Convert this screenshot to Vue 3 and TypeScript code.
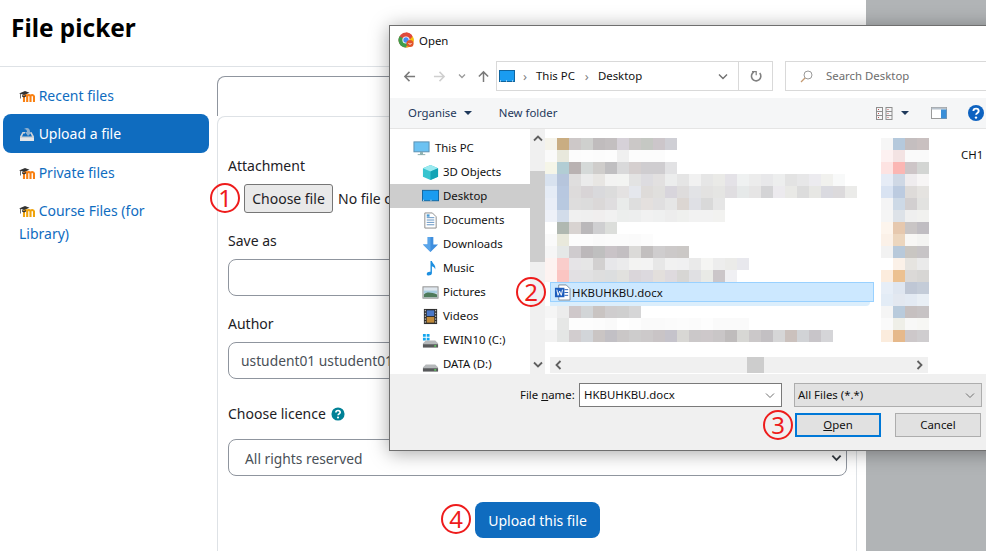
<script setup lang="ts">
const navItems = [
  { label: 'Recent files', icon: 'moodle', active: false },
  { label: 'Upload a file', icon: 'upload', active: true },
  { label: 'Private files', icon: 'moodle', active: false },
  { label: 'Course Files (for Library)', icon: 'course', active: false },
]
const tree = [
  { label: 'This PC', icon: 'pc', root: true, selected: false },
  { label: '3D Objects', icon: 'cube', root: false, selected: false },
  { label: 'Desktop', icon: 'desktop', root: false, selected: true },
  { label: 'Documents', icon: 'docs', root: false, selected: false },
  { label: 'Downloads', icon: 'down', root: false, selected: false },
  { label: 'Music', icon: 'music', root: false, selected: false },
  { label: 'Pictures', icon: 'pics', root: false, selected: false },
  { label: 'Videos', icon: 'video', root: false, selected: false },
  { label: 'EWIN10 (C:)', icon: 'win', root: false, selected: false },
  { label: 'DATA (D:)', icon: 'drive', root: false, selected: false },
]
const marks = [
  { n: '1', x: 210, y: 183 },
  { n: '2', x: 516, y: 277 },
  { n: '3', x: 763, y: 410 },
  { n: '4', x: 441, y: 504 },
]
const parse = (rows: string[]) => rows.map((r) => r.split(' ').map((c) => '#' + c))
const blurLeft = parse([
  'f5f3ea c9ad82 cdc8c8 cfd0ce c0bcbd c3bfc0 d6d1d8 cbc8c7 c5c8c3 ccc6ca cfcfd5',
  'fafafa e8e8dc fcfcfc fdfdfd fcfcfc fdfdfd f0f0f0 fcfcfc fcfcfc fcfcfc',
  'f5f5e8 b2cdd4 b9b2b2 d5d9d8 cfcdcb c0bfc1 d9d9da d5cfcf cfcdd0 cfcdd0 e2e2e4',
  'd8e2ef b6c5dc dfdede ebebeb e8e6e3 f3f3f2 f3f4f2 e3e3e3 dddce0 e2e0e0 eceded e5e5e5 f1f1f1 e6e6e6 eaeae7 e4e2e7 eff1f1 ececec e8e8ea edeeee e3e3e3 e7e7e8 ecebef f1f1ee f8f9f9',
  'e5ecf6 b8c8e0 dddbdb d8d4d6 d9d9dc dcdcdc e4e2e2 e5e7ed dedbd9 e0dfdd d8d5dc dedcdc e2e3e6 e3e2e1 e5e5e3 e0dee1 e6e9e9 e6e5e5 d4d4d6 eceaee e9e9e6 dcdcdc e7e7e4 dadae0 dcdadc ebebe9',
  'e9eef7 b8c9e0 dedddd dcdcdc dbd8d8 dfdddf e9ebea dedede e4e0de e0dfe0 e6e6e6 dcd6d2 dfe0e5 d9d9d9 e6e6e6',
  'eef1f8 d2dcea f0f0f0 efefef f0eeee f1f1f1 eceeed edeeee f1f1f1 eff0f0 ededed eff0ee f2f2f2 f2f2f2 f2f2f0',
  'ffffff b0b8b1 d8d3d1 bab8ba cfcfd1 dcdedb',
  'fafafa e9e9dc fcfcfc fcfcfc fafafa fbfbfb fbfbfb fafafa fcfcfc',
  'f6f6f6 e5e8e7 cfcbce bcb8ba bfbfbf c9c3c7 c3bfc2 dbdad8 c2bfbf cfcdce ccc9c9 cbc8c6',
  'fdf3f1 f9cdcb e6e4e7 e6e6e6 d2d0d0 e7e7ea ebebec f3f3f2 f3f3f3 e7e7e7 f1f1f1 f0f0f1 eaeaea f5f5f3 ededed ebebe9 e8e8ed',
  'fdf3f1 fbc5c2 e2e0e3 e1e1e2 dedede dcdedf e1e1de dad6da dcd9de e3dfdc dedade d7d6d4 e0e0e3 e9eae6 cbc6c9 f0f0f3',
  'ffffff',
  'ffffff',
  'f5f5f5 ececec cfc8ca d2d5d7 c9c4c2 cfcdce cfcfcf d6d6d7',
  'fafafa e6e7e6 fdfdfd fdfdfd fcfcfc fafafa ffffff fdfdfd fafafa fafafa fbfbfb fcfcfc fbfbfb fdfdfd fafafa fafafa fafafa',
  'f2f2f2 e4e6e5 d2cdcf d2d5d9 cac5c4 c2c0c5 cac7c7 cdcccc ccc9ca c9c4c6 c5c3cb d8d7d4 cbc8c9 cdc8ca c9c6c7 bfbcbc d7d7d4 cbc8c9 c3c0c3 d6d6d7 cbc1bd d1d3d6 c8c5c9 d5d5d8',
])
const blurRight = parse([
  'f6f6f6 b5c9dc c4bebf c9c0c0',
  'fdf1f1 f3e3e3 fafafa fafafa',
  'fde3e2 fbb6b3 cdc5c7 d3d5d3',
  'e6ecf6 cfd8e5 efecee f7f5f5',
  'd9e3f2 bccbe0 dedbd9 e5e3e0',
  'f4f4f5 cdd9e6 d2cfd0 e2e2e0',
  'f5f5f5 dde2e8 efefef f1f1ef',
  'fdf5ed e6c8ae c9c5c5 c0bdc2',
  'fbf1e8 ecd6be f8f7f5 f4f4f2',
  'f2f2f2 b8c9da c9c6c2 c7c4c6',
  'ffffff fbf1e8 e6e4e0 eaeaea',
  'fcecdd ecc191 dbd9d7 d7d6d4',
  'e7eef7 dfe6f0 bfc7d5 c4ccd8',
  'e3ecf6 e3e8f0 e3eaf3 e9eff5',
  'f5f5f5 b9cbdc c6c0c0 c7c3c4',
  'fafafa efefe8 f8f8f7 f7f7f4',
  'fbecdd e6b98b cdc8ca cfcdcf',
])
</script>

<template>
  <div class="screen">
    <div class="page">
      <header class="head"><h1>File picker</h1></header>
      <div class="body">
        <nav class="side">
          <a v-for="it in navItems" :key="it.label" class="side-item" :class="{ active: it.active }">
            <svg v-if="it.icon === 'upload'" class="nav-ico" viewBox="0 0 16 16">
              <path d="M1 10.500 3.500 6H6v1.500H4.400L3 10.500h10l-1.400-3H10V6h2.500L15 10.500V15H1z" fill="#cfd3d8" />
              <path d="M1 12h14v3H1z" fill="#e4e6e8" />
              <path d="M5 3c3-2 6-1 6 3h2l-4 4-3-4h2c0-2-1-3-3-3z" fill="#8eb0cf" />
            </svg>
            <svg v-else class="nav-ico" viewBox="0 0 16 16">
              <path d="M5 14V8.500c0-2 3.200-2 3.200 0V14M8.200 8.500c0-2 3.300-2 3.300 0V14M11.500 8.500c0-2 3.500-2 3.500 .5V14" fill="none" :stroke="it.icon === 'course' ? '#f0a30a' : '#f98012'" stroke-width="2.100" />
              <path d="M0 5.500 6 3l4.500 1.700L5 7 2 5.900V10.500H1.300V5.700z" fill="#333" />
              <path d="M3 7 5 7.900 7 7V8.500L5 9.500 3 8.500z" fill="#333" />
            </svg>
            {{ it.label }}
          </a>
        </nav>
        <main class="content">
          <div class="tabs"></div>
          <form class="panel">
            <label class="lbl first">Attachment</label>
            <div class="file-row">
              <button type="button" class="choose">Choose file</button>
              <span class="nofile">No file chosen</span>
            </div>
            <label class="lbl gap">Save as</label>
            <div class="field"></div>
            <label class="lbl gap">Author</label>
            <div class="field">ustudent01 ustudent01</div>
            <label class="lbl licence">
              Choose licence
              <svg class="help" viewBox="0 0 16 16">
                <circle cx="8" cy="8" r="7.500" fill="#008196" />
                <path d="M5.600 6.300c0-3 4.900-3 4.900-.2 0 1.800-2.400 1.800-2.400 3.400" fill="none" stroke="#fff" stroke-width="1.900" />
                <circle cx="8" cy="12" r="1.200" fill="#fff" />
              </svg>
            </label>
            <div class="field select">
              <span>All rights reserved</span>
              <svg class="sel-chev" viewBox="0 0 12 8"><path d="M1.500 1.500 6 6l4.500-4.500" fill="none" stroke="#343a40" stroke-width="2" /></svg>
            </div>
            <div class="submit"><button type="button" class="upload">Upload this file</button></div>
          </form>
        </main>
      </div>
    </div>
    <div class="backdrop"></div>

    <section class="dialog">
      <div class="titlebar">
        <svg class="chrome" viewBox="0 0 16 16">
          <circle cx="8" cy="8" r="7.500" fill="#dd4b3e" />
          <path d="M8 8 1.500 4.200A7.500 7.500 0 0 0 8 15.500l3.400-6z" fill="#3f9d4b" />
          <path d="M8 .5a7.500 7.500 0 0 1 6.500 3.700H8z" fill="#e24a3b" />
          <path d="M14.700 4.200A7.500 7.500 0 0 1 8 15.500L11.500 8z" fill="#f4c20d" />
          <circle cx="8" cy="8" r="3.600" fill="#fff" />
          <circle cx="8" cy="8" r="2.700" fill="#4a8af4" />
          <circle cx="12" cy="11.500" r="3.600" fill="#e2542b" />
          <path d="m10.500 11 1.500 1.500 1.500-1.500" fill="none" stroke="#fff" stroke-width="1" />
        </svg>
        <span class="title">Open</span>
        <svg class="close" viewBox="0 0 12 12"><path d="M1 1l10 10M11 1 1 11" stroke="#111" stroke-width="1.100" /></svg>
      </div>
      <div class="navbar">
        <svg class="nb" viewBox="0 0 14 14"><path d="M13 7H2M7 2 2 7l5 5" fill="none" stroke="#7a7a7a" stroke-width="1.600" /></svg>
        <svg class="nb forward" viewBox="0 0 14 14"><path d="M1 7h11M7 2l5 5-5 5" fill="none" stroke="#cfcfcf" stroke-width="1.600" /></svg>
        <svg class="nb small" viewBox="0 0 8 6"><path d="M1 1.500 4 4.500l3-3" fill="none" stroke="#9a9a9a" stroke-width="1.300" /></svg>
        <svg class="nb up" viewBox="0 0 14 14"><path d="M7 13V2M2 7l5-5 5 5" fill="none" stroke="#7a7a7a" stroke-width="1.600" /></svg>
        <div class="address">
          <svg class="crumb-ico" viewBox="0 0 16 13"><rect x=".5" y=".5" width="15" height="11" fill="#1a9cf0" stroke="#10659f" /><path d="M1 11h14" stroke="#fff" stroke-dasharray="1 5" /></svg>
          <span class="sep">›</span><span class="crumb">This PC</span><span class="sep">›</span><span class="lift">Desktop</span>
          <svg class="addr-chev" viewBox="0 0 10 7"><path d="M1 1.500 5 5.500l4-4" fill="none" stroke="#707070" stroke-width="1.400" /></svg>
          <div class="refresh">
            <svg viewBox="0 0 12 13" width="12" height="13"><path d="M3 2.500a4.700 4.700 0 1 0 6 0" transform="rotate(10 6 7)" fill="none" stroke="#808080" stroke-width="1.600" /><path d="M2 1.600h4.200v3.600" fill="none" stroke="#808080" stroke-width="1.200" /></svg>
          </div>
        </div>
        <div class="search">
          <svg viewBox="0 0 13 13" width="13" height="13"><circle cx="8" cy="5" r="4" fill="none" stroke="#9a9a9a" /><path d="M5 8 1 12" stroke="#c59a70" stroke-width="1.200" /></svg>
          <span class="lift">Search Desktop</span>
        </div>
      </div>
      <div class="toolbar">
        <span class="tool lift">Organise</span>
        <i class="caret"></i>
        <span class="tool newf lift">New folder</span>
        <svg class="views" viewBox="0 0 17 13"><g fill="none" stroke="#8e8e8e"><rect x=".5" y=".5" width="6" height="12" /><rect x="10" y=".5" width="6" height="12" /><path d="M.5 4.500h6M.5 8.500h6M10 4.500h6M10 8.500h6" /></g><path d="M2 2.500h1M2 6.500h1M2 10.500h1M11.500 2.500h1M11.500 6.500h1M11.500 10.500h1" stroke="#c05050" /></svg>
        <i class="caret dark"></i>
        <svg class="pane" viewBox="0 0 16 12"><rect x=".5" y=".5" width="15" height="11" fill="#fff" stroke="#9a9a9a" /><rect x=".5" y=".5" width="15" height="2" fill="#b8c2cc" /><rect x="10" y="2.500" width="5.500" height="9" fill="#3a8fd8" /></svg>
        <svg class="q" viewBox="0 0 16 16"><circle cx="8" cy="8" r="8" fill="#0d62c0" /><path d="M5.400 6c0-3.200 5.300-3.200 5.300 0 0 1.900-2.600 1.900-2.600 3.800" fill="none" stroke="#fff" stroke-width="1.900" /><circle cx="8" cy="12.600" r="1.200" fill="#fff" /></svg>
      </div>
      <div class="main">
        <div class="tree">
          <div v-for="n in tree" :key="n.label" class="tree-row" :class="{ root: n.root, sel: n.selected }">
            <svg class="tree-ico" viewBox="0 0 18 18">
              <template v-if="n.icon === 'pc'"><rect x="1" y="2" width="16" height="10.500" fill="#6cc2f2" stroke="#5a8fb0" /><path d="M8 13h2v2H8zM5 15.500h8" stroke="#8aa" fill="#9bb" /></template>
              <template v-else-if="n.icon === 'cube'"><path d="M9 1 17 4.500v9L9 17l-8-3.500v-9z" fill="#37c4cf" /><path d="M9 1 17 4.500 9 8 1 4.500z" fill="#9beaf0" /><path d="M9 8v9l8-3.500v-9z" fill="#12a3b5" /></template>
              <template v-else-if="n.icon === 'desktop'"><rect x=".5" y="2.500" width="17" height="11" fill="#1a9cf0" stroke="#10659f" /><path d="M1 13h16" stroke="#fff" stroke-dasharray="1 7" /></template>
              <template v-else-if="n.icon === 'docs'"><path d="M3 1h8l4 4v12H3z" fill="#fff" stroke="#8a8a8a" /><path d="M5 6h8M5 8.500h8M5 11h8M5 13.500h8" stroke="#5e8fc0" /><path d="M5 2.500h3V5H5z" fill="#4a9ad4" /></template>
              <template v-else-if="n.icon === 'down'"><path d="M6 1h6v8h5l-8 8-8-8h5z" fill="#3e8ede" /><path d="M6 1h3v16l-8-8h5z" fill="#5aa5ea" /></template>
              <template v-else-if="n.icon === 'music'"><path d="M9 1h1.500c.5 3 4.500 4 3.500 9-.5-2-2-3-3.500-3.500V14c0 2.500-5.500 3.500-5.500.8C5 12.500 8 12 9 12.500z" fill="#1d8fe0" /></template>
              <template v-else-if="n.icon === 'pics'"><rect x="1" y="3" width="16" height="12" fill="#dfe7ee" stroke="#8d8d8d" /><path d="M2 7h14v3H2z" fill="#a7cde0" /><path d="M2 11c3-3 8-2 14 0v3H2z" fill="#4e7a5a" /></template>
              <template v-else-if="n.icon === 'video'"><rect x="2" y="1" width="14" height="16" fill="#2f2f2f" /><rect x="5" y="2.500" width="8" height="6" fill="#4a78c8" /><rect x="5" y="9.500" width="8" height="6" fill="#c08a3a" /><path d="M3.500 2v14M14.500 2v14" stroke="#ddd" stroke-dasharray="1.500 1.500" /></template>
              <template v-else-if="n.icon === 'win'"><path d="M1 2h3v3H1zM5 2h3v3H5zM1 6h3v3H1zM5 6h3v3H5z" fill="#14a6ee" /><path d="M2 11 4 9h10l3 3v4H1v-4z" fill="#b5b8ba" /><rect x="1" y="13" width="16" height="3.500" fill="#58595b" /><rect x="13" y="14" width="2" height="1.500" fill="#5fdc5f" /></template>
              <template v-else><path d="M2 11 4 9h10l3 3v4H1v-4z" fill="#b5b8ba" /><rect x="1" y="13" width="16" height="3.500" fill="#58595b" /><rect x="13" y="14" width="2" height="1.500" fill="#5fdc5f" /></template>
            </svg>
            <span class="lift">{{ n.label }}</span>
          </div>
        </div>
        <div class="vscroll">
          <svg class="sc-arrow" viewBox="0 0 10 7"><path d="M1 5.500 5 1.500l4 4" fill="none" stroke="#606060" stroke-width="1.800" /></svg>
          <div class="vtrack"><div class="vthumb"></div></div>
          <svg class="sc-arrow" viewBox="0 0 10 7"><path d="M1 1.500 5 5.500l4-4" fill="none" stroke="#606060" stroke-width="1.800" /></svg>
        </div>
        <div class="files">
          <div class="blur-wrap">
            <div class="blur left">
              <div v-for="(r, i) in blurLeft" :key="i" class="blur-row">
                <i v-for="(c, j) in r" :key="j" :style="{ background: c }"></i>
              </div>
            </div>
            <div class="blur right">
              <div v-for="(r, i) in blurRight" :key="i" class="blur-row">
                <i v-for="(c, j) in r" :key="j" :style="{ background: c }"></i>
              </div>
            </div>
            <span class="ch">CH1</span>
          </div>
          <div class="smear"></div>
          <div class="file-sel">
            <svg class="word" viewBox="0 0 18 18">
              <path d="M5 1h8l4 4v12H5z" fill="#fff" stroke="#7d8a99" />
              <path d="M11 6h4M11 9h4M11 12h4" stroke="#2b5fb0" />
              <rect x="1" y="4" width="10" height="10" fill="#1d5cbc" />
              <path d="m3 6 1.300 6L6 7.500 7.700 12 9 6" fill="none" stroke="#fff" stroke-width="1" />
            </svg>
            <span>HKBUHKBU.docx</span>
          </div>
          <div class="hscroll">
            <svg class="sc-arrow-h" viewBox="0 0 7 10"><path d="M5.500 1 1.500 5l4 4" fill="none" stroke="#606060" stroke-width="1.800" /></svg>
            <div class="htrack"><div class="hthumb"></div></div>
            <svg class="sc-arrow-h" viewBox="0 0 7 10"><path d="M1.500 1l4 4-4 4" fill="none" stroke="#606060" stroke-width="1.800" /></svg>
          </div>
        </div>
      </div>
      <div class="footer">
        <div class="foot-line">
          <span class="fname lift">File <u>n</u>ame:</span>
          <div class="name-box"><span class="lift">HKBUHKBU.docx</span><svg viewBox="0 0 10 7" width="10" height="7"><path d="M1 1.500 5 5.500l4-4" fill="none" stroke="#707070" /></svg></div>
          <div class="type-box"><span class="lift">All Files (*.*)</span><svg viewBox="0 0 10 7" width="10" height="7"><path d="M1 1.500 5 5.500l4-4" fill="none" stroke="#707070" /></svg></div>
        </div>
        <div class="foot-btns">
          <button type="button" class="win-btn primary"><u>O</u>pen</button>
          <button type="button" class="win-btn">Cancel</button>
        </div>
      </div>
    </section>

    <span v-for="m in marks" :key="m.n" class="mark" :style="{ left: m.x + 'px', top: m.y + 'px' }">{{ m.n }}</span>
  </div>
</template>

<style>
html, body { margin: 0; overflow: hidden; background: #fff; }
</style>

<style scoped>
.screen { position: relative; display: flex; width: 986px; height: 551px; overflow: hidden; font-family: "Noto Sans", "Open Sans", sans-serif; color: #1d2125; }
.page { width: 866px; flex: none; background: #fff; }
.backdrop { flex: 1; background: #b1b4b6; }
.head { height: 67px; box-sizing: border-box; border-bottom: 1px solid #dee2e6; padding: 12px 11px 0; }
h1 { margin: 0; font-size: 24.4px; line-height: 32px; font-weight: 700; color: #000; }
.body { display: flex; }
.side { width: 217px; flex: none; box-sizing: border-box; padding: 8px 8px 0 3px; }
.side-item { display: block; padding: 8px 16px; font-size: 14px; line-height: 23px; color: #0f6cbf; border-radius: 8px; }
.side-item:first-child { padding: 9px 16px 7px; }
.side-item:last-child { padding-top: 7px; }
.side-item.active { background: #0f6cbf; color: #fff; }
.nav-ico { width: 16px; height: 16px; vertical-align: -3px; }
.content { width: 640px; flex: none; margin-top: 9px; }
.tabs { height: 39px; border: 1px solid #8f959e; border-bottom: none; border-radius: 8px 8px 0 0; }
.panel { display: flex; flex-direction: column; height: 436px; box-sizing: border-box; border: 1px solid #dee2e6; border-bottom: none; border-radius: 8px 8px 0 0; padding: 37px 9px 0 10px; font-size: 14px; }
.lbl { display: block; line-height: 23px; }
.gap { margin-top: 16px; margin-bottom: 7px; }
.licence { margin-top: 23px; margin-bottom: 14px; }
.first { margin-bottom: 7px; }
.help { width: 14px; height: 14px; vertical-align: -2px; margin-left: 2px; }
.file-row { display: flex; align-items: center; gap: 5px; padding-left: 16px; height: 29px; white-space: nowrap; }
.choose { width: 89px; height: 29px; padding: 0; font: inherit; color: #1d2125; background: #e9e9e9; border: 1px solid #767676; border-radius: 3px; }
.field { height: 37px; box-sizing: border-box; border: 1px solid #8f959e; border-radius: 8px; padding: 0 12px; font-size: 13.8px; line-height: 35px; color: #495057; }
.select { display: flex; align-items: center; justify-content: space-between; padding: 1px 4px 0 16px; }
.sel-chev { width: 11px; height: 8px; }
.submit { display: flex; justify-content: center; margin-top: 26px; }
.upload { width: 125px; height: 36px; padding: 0; font: inherit; color: #fff; background: #0f6cbf; border: none; border-radius: 8px; }

.dialog { position: absolute; left: 389px; top: 25px; width: 640px; height: 426px; box-sizing: border-box; display: flex; flex-direction: column; background: #fff; border: 1px solid #6f6f6f; box-shadow: 0 2px 18px rgba(0, 0, 0, .35); font-size: 11.4px; color: #111; }
.lift { padding-bottom: 2px; }
.titlebar { display: flex; align-items: center; height: 28px; flex: none; padding-left: 8px; }
.chrome { width: 16px; height: 16px; }
.title { margin-left: 5px; }
.close { width: 10px; height: 10px; margin-left: 561px; }
.navbar { display: flex; align-items: center; height: 30px; margin-top: 7px; flex: none; }
.nb { width: 13px; height: 13px; margin-left: 13px; flex: none; }
.forward { margin-left: 17px; }
.small { width: 8px; height: 6px; margin-left: 12px; }
.up { margin-left: 11px; }
.address { display: flex; align-items: center; box-sizing: border-box; width: 277px; height: 30px; margin-left: 6px; border: 1px solid #d9d9d9; padding-left: 2px; }
.crumb-ico { width: 16px; height: 13px; }
.sep { color: #808080; margin: 0 9px 0 8px; font-size: 13px; line-height: 14px; }
.crumb { margin-right: 2px; padding-bottom: 2px; }
.addr-chev { width: 10px; height: 7px; margin-left: auto; margin-right: 10px; }
.refresh { display: flex; align-items: center; justify-content: center; width: 33px; height: 28px; border-left: 1px solid #d9d9d9; flex: none; }
.search { display: flex; align-items: center; gap: 13px; box-sizing: border-box; width: 240px; height: 30px; margin-left: 12px; border: 1px solid #d9d9d9; padding-left: 14px; color: #6d6d6d; flex: none; }
.toolbar { display: flex; align-items: center; height: 31px; margin-top: 7px; flex: none; background: #f5f6f7; border-bottom: 1px solid #e5e5e5; box-sizing: border-box; padding-left: 18px; }
.tool { color: #1e395b; }
.newf { margin-left: 27px; }
.caret { display: block; width: 0; height: 0; border: 4px solid transparent; border-top: 4px solid #1e395b; border-bottom: none; margin-left: 7px; }
.caret.dark { margin-left: 8px; }
.views { width: 17px; height: 13px; margin-left: 319px; flex: none; }
.pane { width: 16px; height: 12px; margin-left: 22px; flex: none; }
.q { width: 16px; height: 16px; margin-left: 21px; flex: none; }
.main { display: flex; height: 245px; flex: none; }
.tree { width: 140px; flex: none; overflow: hidden; padding-top: 7px; box-sizing: border-box; }
.tree-row { display: flex; align-items: center; height: 24px; padding-left: 32px; gap: 4px; }
.tree-row.root { padding-left: 23px; gap: 5px; }
.tree-row.sel { background: #cdcdcd; }
.tree-ico { width: 17px; height: 17px; flex: none; }
.vscroll { width: 15px; flex: none; display: flex; flex-direction: column; align-items: center; background: #f0f0f0; padding: 6px 0; box-sizing: border-box; }
.vtrack { flex: 1; width: 100%; padding-top: 29px; box-sizing: border-box; }
.vthumb { height: 91px; background: #cdcdcd; }
.sc-arrow { width: 10px; height: 7px; }
.files { position: relative; flex: 1; min-width: 0; display: flex; flex-direction: column; }
.blur-wrap { position: relative; flex: 1; display: flex; padding-top: 9px; overflow: hidden; }
.blur { flex: none; }
.left { width: 336px; }
.right { width: 48px; }
.blur-row { display: flex; height: 12px; }
.blur-row i { display: block; width: 12px; height: 12px; flex: none; }
.ch { position: absolute; left: 416px; top: 18px; }
.smear { position: absolute; left: 5px; top: 173px; width: 320px; height: 4px; background: #dbeefc; border-radius: 0 0 30px 0; }
.file-sel { position: absolute; left: 5px; top: 153px; width: 324px; height: 20px; box-sizing: border-box; display: flex; align-items: center; gap: 1px; background: #cce8ff; border: 1px solid #99d1ff; padding-left: 3px; }
.word { width: 17px; height: 17px; flex: none; }
.hscroll { display: flex; align-items: center; height: 16px; margin: 0 100px 1px 5px; background: #f0f0f0; flex: none; }
.sc-arrow-h { width: 7px; height: 10px; flex: none; margin: 0 5px; }
.htrack { flex: 1; padding-left: 180px; }
.hthumb { width: 17px; height: 16px; background: #cdcdcd; }
.footer { flex: 1; background: #f0f0f0; padding-top: 9px; }
.foot-line { display: flex; align-items: center; height: 24px; }
.fname { margin-left: 130px; width: 59px; }
.name-box, .type-box { display: flex; align-items: center; justify-content: space-between; box-sizing: border-box; height: 24px; padding: 0 6px 0 3px; flex: none; }
.name-box { width: 203px; background: #fff; border: 1px solid #7a7a7a; padding-left: 4px; }
.type-box { width: 188px; margin-left: 12px; background: #e1e1e1; border: 1px solid #adadad; }
.foot-btns { display: flex; gap: 14px; padding-left: 405px; margin-top: 6px; }
.win-btn { width: 86px; height: 24px; padding: 0 0 2px; font: inherit; color: #111; background: #e1e1e1; border: 1px solid #adadad; box-sizing: border-box; }
.win-btn.primary { border: 2px solid #0078d7; }
.mark { position: absolute; display: flex; align-items: center; justify-content: center; box-sizing: border-box; width: 30px; height: 30px; border: 2px solid #ee1c1c; border-radius: 50%; color: #ee1c1c; font-size: 24px; font-family: "Noto Sans", sans-serif; line-height: 1; }
</style>
